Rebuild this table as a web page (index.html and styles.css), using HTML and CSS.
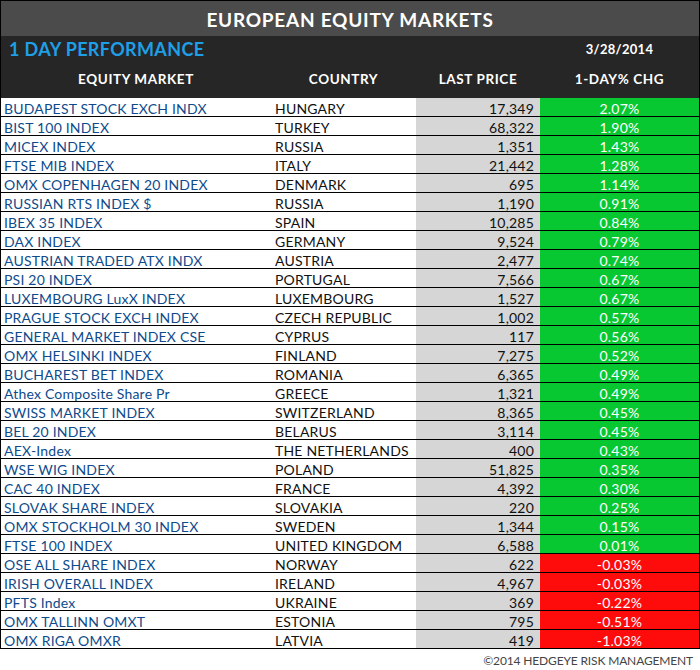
FILE: index.html
```html
<!DOCTYPE html>
<html>
<head>
<meta charset="utf-8">
<link rel="stylesheet" href="styles.css">
</head>
<body>
<div class="board">
  <div class="title">EUROPEAN EQUITY MARKETS</div>
  <div class="subhead">
    <div class="perf">1 DAY PERFORMANCE</div>
    <div class="blank"></div>
    <div class="blank"></div>
    <div class="date">3/28/2014</div>
    <div class="colh">EQUITY MARKET</div>
    <div class="colh">COUNTRY</div>
    <div class="colh">LAST PRICE</div>
    <div class="colh">1-DAY% CHG</div>
  </div>
  <div class="rows">
    <div class="row up"><span class="mkt">BUDAPEST STOCK EXCH INDX</span><span class="cty">HUNGARY</span><span class="px">17,349</span><span class="chg">2.07%</span></div>
    <div class="row up"><span class="mkt">BIST 100 INDEX</span><span class="cty">TURKEY</span><span class="px">68,322</span><span class="chg">1.90%</span></div>
    <div class="row up"><span class="mkt">MICEX INDEX</span><span class="cty">RUSSIA</span><span class="px">1,351</span><span class="chg">1.43%</span></div>
    <div class="row up"><span class="mkt">FTSE MIB INDEX</span><span class="cty">ITALY</span><span class="px">21,442</span><span class="chg">1.28%</span></div>
    <div class="row up"><span class="mkt">OMX COPENHAGEN 20 INDEX</span><span class="cty">DENMARK</span><span class="px">695</span><span class="chg">1.14%</span></div>
    <div class="row up"><span class="mkt">RUSSIAN RTS INDEX $</span><span class="cty">RUSSIA</span><span class="px">1,190</span><span class="chg">0.91%</span></div>
    <div class="row up"><span class="mkt">IBEX 35 INDEX</span><span class="cty">SPAIN</span><span class="px">10,285</span><span class="chg">0.84%</span></div>
    <div class="row up"><span class="mkt">DAX INDEX</span><span class="cty">GERMANY</span><span class="px">9,524</span><span class="chg">0.79%</span></div>
    <div class="row up"><span class="mkt">AUSTRIAN TRADED ATX INDX</span><span class="cty">AUSTRIA</span><span class="px">2,477</span><span class="chg">0.74%</span></div>
    <div class="row up"><span class="mkt">PSI 20 INDEX</span><span class="cty">PORTUGAL</span><span class="px">7,566</span><span class="chg">0.67%</span></div>
    <div class="row up"><span class="mkt">LUXEMBOURG LuxX INDEX</span><span class="cty">LUXEMBOURG</span><span class="px">1,527</span><span class="chg">0.67%</span></div>
    <div class="row up"><span class="mkt">PRAGUE STOCK EXCH INDEX</span><span class="cty">CZECH REPUBLIC</span><span class="px">1,002</span><span class="chg">0.57%</span></div>
    <div class="row up"><span class="mkt">GENERAL MARKET INDEX CSE</span><span class="cty">CYPRUS</span><span class="px">117</span><span class="chg">0.56%</span></div>
    <div class="row up"><span class="mkt">OMX HELSINKI INDEX</span><span class="cty">FINLAND</span><span class="px">7,275</span><span class="chg">0.52%</span></div>
    <div class="row up"><span class="mkt">BUCHAREST BET INDEX</span><span class="cty">ROMANIA</span><span class="px">6,365</span><span class="chg">0.49%</span></div>
    <div class="row up"><span class="mkt">Athex Composite Share Pr</span><span class="cty">GREECE</span><span class="px">1,321</span><span class="chg">0.49%</span></div>
    <div class="row up"><span class="mkt">SWISS MARKET INDEX</span><span class="cty">SWITZERLAND</span><span class="px">8,365</span><span class="chg">0.45%</span></div>
    <div class="row up"><span class="mkt">BEL 20 INDEX</span><span class="cty">BELARUS</span><span class="px">3,114</span><span class="chg">0.45%</span></div>
    <div class="row up"><span class="mkt">AEX-Index</span><span class="cty">THE NETHERLANDS</span><span class="px">400</span><span class="chg">0.43%</span></div>
    <div class="row up"><span class="mkt">WSE WIG INDEX</span><span class="cty">POLAND</span><span class="px">51,825</span><span class="chg">0.35%</span></div>
    <div class="row up"><span class="mkt">CAC 40 INDEX</span><span class="cty">FRANCE</span><span class="px">4,392</span><span class="chg">0.30%</span></div>
    <div class="row up"><span class="mkt">SLOVAK SHARE INDEX</span><span class="cty">SLOVAKIA</span><span class="px">220</span><span class="chg">0.25%</span></div>
    <div class="row up"><span class="mkt">OMX STOCKHOLM 30 INDEX</span><span class="cty">SWEDEN</span><span class="px">1,344</span><span class="chg">0.15%</span></div>
    <div class="row up"><span class="mkt">FTSE 100 INDEX</span><span class="cty">UNITED KINGDOM</span><span class="px">6,588</span><span class="chg">0.01%</span></div>
    <div class="row down"><span class="mkt">OSE ALL SHARE INDEX</span><span class="cty">NORWAY</span><span class="px">622</span><span class="chg">-0.03%</span></div>
    <div class="row down"><span class="mkt">IRISH OVERALL INDEX</span><span class="cty">IRELAND</span><span class="px">4,967</span><span class="chg">-0.03%</span></div>
    <div class="row down"><span class="mkt">PFTS Index</span><span class="cty">UKRAINE</span><span class="px">369</span><span class="chg">-0.22%</span></div>
    <div class="row down"><span class="mkt">OMX TALLINN OMXT</span><span class="cty">ESTONIA</span><span class="px">795</span><span class="chg">-0.51%</span></div>
    <div class="row down"><span class="mkt">OMX RIGA OMXR</span><span class="cty">LATVIA</span><span class="px">419</span><span class="chg">-1.03%</span></div>
  </div>
</div>
<div class="footer">©2014 HEDGEYE RISK MANAGEMENT</div>
</body>
</html>
```

FILE: styles.css
```css
html, body {
  margin: 0;
  padding: 0;
  background: #ffffff;
}
body {
  width: 700px;
  font-family: Lato, "Liberation Sans", sans-serif;
}
.board {
  width: 698px;
  border: 1px solid #000;
  border-bottom: none;
}
.title {
  height: 35px;
  background: #4b4b4b;
  color: #fff;
  font-weight: 700;
  font-size: 19px;
  line-height: 37px;
  text-align: center;
  letter-spacing: 0.75px;
}
.subhead {
  background: #262626;
  height: 62px;
  display: grid;
  grid-template-columns: 270px 145px 124px 159px;
  grid-template-rows: 27px 35px;
}
.perf {
  color: #1e9fe6;
  font-weight: 700;
  font-size: 18px;
  line-height: 26px;
  padding-left: 8px;
  letter-spacing: 0.35px;
  white-space: nowrap;
}
.date {
  color: #fff;
  font-weight: 700;
  font-size: 13px;
  line-height: 26px;
  text-align: center;
  letter-spacing: 0.3px;
}
.colh {
  color: #fff;
  font-weight: 700;
  font-size: 13.5px;
  line-height: 33px;
  text-align: center;
  letter-spacing: 0.6px;
}
.row {
  display: grid;
  grid-template-columns: 270px 145px 124px 159px;
  height: 18px;
  border-bottom: 1px solid #000;
  font-size: 14px;
  line-height: 21px;
  letter-spacing: 0.2px;
}
.row span {
  white-space: nowrap;
  overflow: hidden;
}
.mkt {
  color: #0e4b8c;
  padding-left: 3px;
}
.cty {
  color: #111;
  padding-left: 4px;
}
.px {
  background: #d6d6d6;
  color: #111;
  text-align: right;
  padding-right: 6px;
}
.chg {
  color: #fff;
  text-align: center;
}
.up .chg {
  background: #08c832;
}
.down .chg {
  background: #fe0c0c;
}
.footer {
  width: 693px;
  text-align: right;
  color: #444;
  font-size: 12px;
  line-height: 23px;
  letter-spacing: -0.15px;
}
```
